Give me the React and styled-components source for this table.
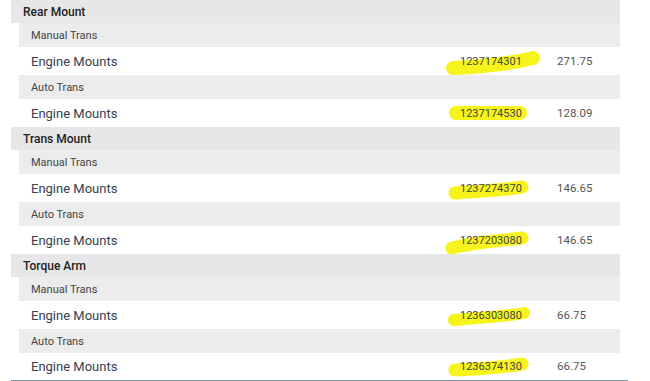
import React from "react";
import styled, { createGlobalStyle } from "styled-components";

const Global = createGlobalStyle`
  html, body { margin: 0; padding: 0; background: #fff; }
  body { font-family: Roboto, "Liberation Sans", Arial, sans-serif; }
`;

const Table = styled.div`
  margin-left: 11px;
  width: 617px;
  border-bottom: 2px solid #7f929e;
`;

const Section = styled.div`
  width: 609px;
  display: flex;
  flex-direction: column;
`;

const Header = styled.div`
  height: 23px;
  display: flex;
  align-items: center;
  padding-left: 12px;
  background: #e7e7e9;
  font-size: 12px;
  font-weight: 500;
  color: #222;
`;

const Sub = styled.div`
  margin-left: 8px;
  height: 24px;
  display: flex;
  align-items: center;
  padding-left: 12px;
  background: #ececec;
  font-size: 11px;
  color: #444;
`;

const Item = styled.div`
  margin-left: 8px;
  height: ${(p) => (p.$last ? 26 : 28)}px;
  padding-bottom: ${(p) => (p.$last ? 1 : 0)}px;
  display: grid;
  grid-template-columns: 1fr 97px 63px;
  align-items: center;
  padding-left: 12px;
  background: #fff;
`;

const Name = styled.span`
  font-size: 13px;
  color: #36414f;
`;

const Part = styled.span`
  position: relative;
  font-size: 11px;
  color: #444;
  justify-self: start;
`;

const PartText = styled.span`
  position: relative;
`;

const Mark = styled.svg`
  position: absolute;
  left: -10px;
  top: -6px;
  width: 90px;
  height: 26px;
  overflow: visible;
`;

const Price = styled.span`
  font-size: 11.5px;
  color: #555;
`;

const marks = [
  "M3 19 C 25 18, 55 16, 83 9",
  "M6 12 L 70 12",
  "M5 17 C 30 15, 55 14, 72 11",
  "M2 20 C 25 14, 55 12, 72 10",
  "M4 17 C 30 15, 60 13, 74 10",
  "M5 16 C 30 15, 55 13, 72 10",
];

const widths = [14, 14, 13, 13, 12, 13];

const data = [
  {
    title: "Rear Mount",
    rows: [
      { sub: "Manual Trans", part: "1237174301", price: "271.75" },
      { sub: "Auto Trans", part: "1237174530", price: "128.09" },
    ],
  },
  {
    title: "Trans Mount",
    rows: [
      { sub: "Manual Trans", part: "1237274370", price: "146.65" },
      { sub: "Auto Trans", part: "1237203080", price: "146.65" },
    ],
  },
  {
    title: "Torque Arm",
    rows: [
      { sub: "Manual Trans", part: "1236303080", price: "66.75" },
      { sub: "Auto Trans", part: "1236374130", price: "66.75" },
    ],
  },
];

export default function App() {
  let k = 0;
  return (
    <>
      <Global />
      <Table>
        {data.map((s) => (
          <Section key={s.title}>
            <Header>{s.title}</Header>
            {s.rows.map((r) => {
              const i = k++;
              return (
                <React.Fragment key={r.part}>
                  <Sub>{r.sub}</Sub>
                  <Item $last={i === 5}>
                    <Name>Engine Mounts</Name>
                    <Part>
                      <Mark viewBox="0 0 90 26">
                        <path
                          d={marks[i]}
                          stroke="#f6f41a"
                          strokeWidth={widths[i]}
                          strokeLinecap="round"
                          fill="none"
                        />
                      </Mark>
                      <PartText>{r.part}</PartText>
                    </Part>
                    <Price>{r.price}</Price>
                  </Item>
                </React.Fragment>
              );
            })}
          </Section>
        ))}
      </Table>
    </>
  );
}
